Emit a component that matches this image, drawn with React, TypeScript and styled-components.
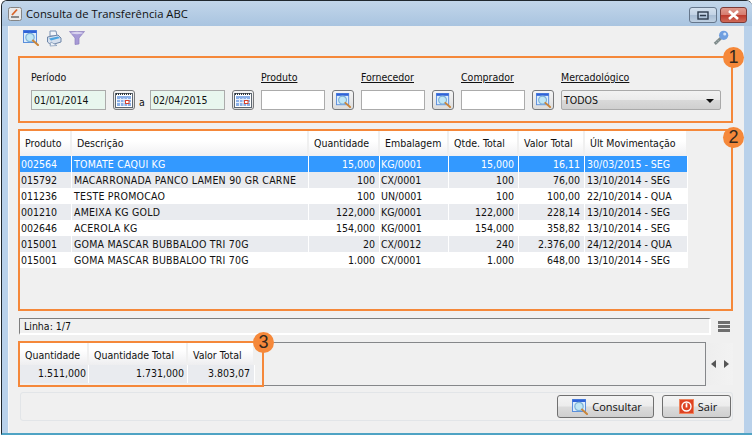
import React from "react";
import styled, { createGlobalStyle } from "styled-components";

const GlobalStyle = createGlobalStyle`
  html, body {
    margin: 0;
    padding: 0;
    background: #ffffff;
  }
  body {
    font-family: "DejaVu Sans Condensed", "Liberation Sans", Arial, sans-serif;
    font-size: 10.5px;
    color: #111;
  }
`;

const ORANGE = "#f5883a";

const Window = styled.div`
  box-sizing: border-box;
  width: 751px;
  height: 435px;
  margin-left: 1px;
  border: 1px solid #20282e;
  border-right: none;
  border-bottom: 2px solid #4fa3c4;
  border-radius: 6px 6px 0 0;
  background: #b9d1ea;
  display: flex;
  flex-direction: column;
  overflow: hidden;
`;

const TitleBar = styled.header`
  box-sizing: border-box;
  height: 25px;
  flex: none;
  display: flex;
  align-items: center;
  padding: 0 5px 0 5px;
  background: linear-gradient(#c2d6ea, #a9c4e0);
`;

const TitleText = styled.span`
  margin-left: 3px;
  font-family: "Open Sans", sans-serif;
  font-size: 11.3px;
  color: #111;
`;

const Controls = styled.div`
  margin-left: auto;
  display: flex;
  gap: 3px;
  align-self: flex-start;
  margin-top: 6px;
`;

const WinButton = styled.div<{ $close?: boolean }>`
  box-sizing: border-box;
  width: ${(p) => (p.$close ? "27px" : "28px")};
  height: 16px;
  border: 1px solid ${(p) => (p.$close ? "#7c3a36" : "#66778c")};
  border-radius: 3px;
  display: flex;
  align-items: center;
  justify-content: center;
  background: ${(p) =>
    p.$close
      ? "linear-gradient(#e09b8e 0%, #d77c6f 48%, #bd3a2c 52%, #d06a58 100%)"
      : "linear-gradient(#d3e0ee 0%, #c3d3e5 48%, #a8bdd4 52%, #bfd0e2 100%)"};
`;

const Client = styled.main`
  box-sizing: border-box;
  flex: 1;
  min-height: 0;
  margin: 0 8px 0 6px;
  background: #f0f0f0;
  border-left: 1px solid #f8f8f8;
  display: flex;
  flex-direction: column;
  padding: 0 0 0 9px;
`;

const Toolbar = styled.div`
  box-sizing: border-box;
  width: 715px;
  height: 30px;
  flex: none;
  display: flex;
  align-items: center;
  gap: 7px;
  padding: 0 4px 6px 5px;
`;

const ToolSpacer = styled.div`
  flex: 1;
`;

const Marked = styled.section`
  box-sizing: border-box;
  position: relative;
  border: 2px solid ${ORANGE};
`;

const FilterBox = styled(Marked)`
  height: 67px;
  width: 715px;
  flex: none;
  padding: 12px 10px 0 11px;
  display: flex;
`;

const Badge = styled.div<{ $top: number; $right: number }>`
  position: absolute;
  width: 21px;
  height: 21px;
  border-radius: 50%;
  background: ${ORANGE};
  color: #33281e;
  font-family: "Liberation Sans", Arial, sans-serif;
  font-size: 18px;
  line-height: 21px;
  text-align: center;
  right: ${(p) => p.$right}px;
  top: ${(p) => p.$top}px;
`;

const Field = styled.div<{ $width: number }>`
  width: ${(p) => p.$width}px;
  flex: none;
  display: flex;
  flex-direction: column;
`;

const FieldLabel = styled.span<{ $link?: boolean }>`
  height: 20px;
  line-height: 15px;
  text-decoration: ${(p) => (p.$link ? "underline" : "none")};
`;

const FieldRow = styled.div`
  display: flex;
  align-items: center;
  height: 20px;
`;

const TextBox = styled.div<{ $width: number; $date?: boolean }>`
  box-sizing: border-box;
  width: ${(p) => p.$width}px;
  height: 20px;
  border: 1px solid #ababab;
  background: ${(p) => (p.$date ? "#e8f6ee" : "#ffffff")};
  padding-left: 2px;
  line-height: 18px;
`;

const IconButton = styled.div`
  box-sizing: border-box;
  width: 22px;
  height: 20px;
  margin-left: 7px;
  border: 1px solid #77787a;
  border-radius: 3px;
  background: linear-gradient(#f6f6f6, #dcdcdc);
  display: flex;
  align-items: center;
  justify-content: center;
`;

const Between = styled.span`
  width: 11px;
  margin-left: 4px;
  padding-top: 4px;
  line-height: 14px;
`;

const SelectBox = styled.div`
  box-sizing: border-box;
  width: 160px;
  height: 20px;
  border: 1px solid #a9a9a9;
  border-radius: 2px;
  background: linear-gradient(#f2f2f2 0%, #ebebeb 48%, #d9d9d9 52%, #cfcfcf 100%);
  display: flex;
  align-items: center;
  justify-content: space-between;
  padding: 0 6px 0 2px;
`;

const Caret = styled.span`
  width: 0;
  height: 0;
  margin-top: 2px;
  border-left: 4px solid transparent;
  border-right: 4px solid transparent;
  border-top: 4px solid #111;
`;

const GridBox = styled(Marked)`
  height: 182px;
  width: 715px;
  flex: none;
  margin-top: 6px;
`;

const Table = styled.div`
  width: 668px;
  background: #ffffff;
`;

const COLUMNS = "52px 237px 71px 69px 70px 66px 103px";

const HeaderRow = styled.div<{ $columns: string }>`
  display: grid;
  grid-template-columns: ${(p) => p.$columns};
  height: 25px;
  background: linear-gradient(#ffffff 40%, #f0f0f2 100%);
`;

const HeadCell = styled.div`
  padding-left: 5px;
  line-height: 25px;
  border-right: 2px solid #f0f0f0;
  white-space: nowrap;
  overflow: hidden;
`;

const DataRow = styled.div<{ $striped?: boolean; $selected?: boolean }>`
  display: grid;
  grid-template-columns: ${COLUMNS};
  height: 16px;
  line-height: 16px;
  background: ${(p) =>
    p.$selected ? "#3399ff" : p.$striped ? "#e9ebef" : "#ffffff"};
  color: ${(p) => (p.$selected ? "#ffffff" : "#111")};
`;

const Cell = styled.div<{ $right?: boolean; $pad?: number; $end?: number }>`
  padding: 0 ${(p) => (p.$right ? p.$end ?? 4 : 0)}px 0 ${(p) => p.$pad ?? 1}px;
  text-align: ${(p) => (p.$right ? "right" : "left")};
  border-right: 1px solid #ffffff;
  white-space: nowrap;
  overflow: hidden;
`;

const NameCell = styled(Cell)`
  letter-spacing: 0.22px;
`;

const StatusRow = styled.div`
  flex: none;
  height: 17px;
  margin-top: 7px;
  margin-left: 1px;
  display: flex;
  align-items: center;
`;

const StatusField = styled.div`
  box-sizing: border-box;
  width: 692px;
  height: 17px;
  border-style: solid;
  border-color: #7e7e7e #ffffff #ffffff #7e7e7e;
  border-width: 1px 2px 2px 1px;
  padding-left: 4px;
  line-height: 14px;
`;

const MenuLines = styled.div`
  margin-left: 7px;
  width: 12px;
  height: 11px;
  display: flex;
  flex-direction: column;
  justify-content: space-between;

  span {
    height: 3px;
    background: #6f6f6f;
  }
`;

const TotalsRow = styled.div`
  flex: none;
  height: 44px;
  margin-top: 7px;
  display: flex;
`;

const TotalsPanel = styled.div`
  box-sizing: border-box;
  width: 688px;
  height: 44px;
  border: 1px solid #85878a;
  border-left: none;
`;

const TotalsBox = styled(Marked)`
  width: 246px;
  height: 46px;
  margin-top: -2px;
  background: #f0f0f0;
`;

const TotalsHeader = styled(HeaderRow)`
  width: 235px;
  height: 22px;
  background: linear-gradient(#ffffff 30%, #eeeef0 100%);
`;

const TotalsData = styled.div`
  display: grid;
  grid-template-columns: 69px 99px 67px;
  width: 235px;
  height: 18px;
  line-height: 17px;
  background: #e9ebef;
`;

const Scroller = styled.div`
  box-sizing: border-box;
  width: 27px;
  height: 42px;
  margin-top: 1px;
  background: linear-gradient(90deg, #eeeeee, #f2f2f2);
  display: flex;
  align-items: center;
  justify-content: space-between;
  padding: 0 4px 0 5px;
`;

const Arrow = styled.span<{ $right?: boolean }>`
  width: 0;
  height: 0;
  border-top: 4px solid transparent;
  border-bottom: 4px solid transparent;
  ${(p) =>
    p.$right
      ? "border-left: 5px solid #555;"
      : "border-right: 5px solid #555;"}
`;

const ActionBar = styled.footer`
  box-sizing: border-box;
  flex: none;
  width: 713px;
  height: 29px;
  margin-top: 6px;
  margin-left: 2px;
  border: 1px solid #e2e5e8;
  border-radius: 3px;
  display: flex;
  align-items: center;
  justify-content: flex-end;
  gap: 8px;
  padding-right: 1px;
`;

const ActionButton = styled.div<{ $width: number }>`
  box-sizing: border-box;
  width: ${(p) => p.$width}px;
  height: 23px;
  padding-left: 3px;
  border: 1px solid #707070;
  border-radius: 3px;
  background: linear-gradient(#f4f4f4 0%, #ececec 48%, #dcdcdc 52%, #cfcfcf 100%);
  display: flex;
  align-items: center;
  justify-content: center;
  gap: 4px;
  font-family: "Open Sans", sans-serif;
  font-size: 11px;
`;

const LensIcon = ({ size = 16 }: { size?: number }) => (
  <svg width={size} height={size} viewBox="0 0 16 16">
    <rect x="0.5" y="0.5" width="13" height="12" fill="#dcecfb" stroke="#5b8fdc" />
    <rect x="0.5" y="0.5" width="13" height="2.5" fill="#2f62d8" />
    <circle cx="7" cy="7.5" r="4.2" fill="#bfe6f5" stroke="#7fb2d8" strokeWidth="1.2" />
    <path d="M10 10.5 L15 15" stroke="#c9853a" strokeWidth="2" strokeLinecap="round" />
  </svg>
);

const PrinterIcon = () => (
  <svg width="16" height="17" viewBox="0 0 16 17">
    <path d="M4 1 L10 1 L11 6 L4 6 Z" fill="#f2f6fb" stroke="#7c93b4" />
    <path d="M1.5 7 L12 5 L15 8 L15 12 L5 15 L1.5 12 Z" fill="#d6e0ee" stroke="#6e86a8" />
    <path d="M3 8.5 L12 6.5 L14 8 L5 10.5 Z" fill="#4aa3e0" />
    <path d="M5 12 L11 15.5 L4 16 Z" fill="#eef3f9" stroke="#7c93b4" strokeWidth="0.7" />
  </svg>
);

const FunnelIcon = () => (
  <svg width="16" height="14" viewBox="0 0 16 14">
    <path d="M0.5 0.5 H15.5 L10 7 V13 L6 13.5 V7 Z" fill="#a79ad6" stroke="#8d80bd" strokeWidth="0.7" />
    <ellipse cx="8" cy="2" rx="6" ry="1.2" fill="#d8d2ee" />
  </svg>
);

const KeyIcon = () => (
  <svg width="16" height="16" viewBox="0 0 18 18">
    <path d="M9 9 L2 15.5" stroke="#7e8a8a" strokeWidth="3.4" />
    <path d="M3 13 L5 15 M5 11 L7 13" stroke="#b7bfbf" strokeWidth="0.8" />
    <circle cx="12" cy="6" r="5.2" fill="#6f9fe0" />
    <circle cx="13.2" cy="4.4" r="1.7" fill="#d6e6fa" />
  </svg>
);

const CalendarIcon = () => (
  <svg width="18" height="16" viewBox="0 0 18 16">
    <rect x="0.5" y="1.5" width="17" height="14" fill="#ffffff" stroke="#5c6670" />
    <path d="M1 2 H17" stroke="#30363c" strokeWidth="2" strokeDasharray="1 1" />
    <rect x="2" y="4" width="14" height="10" fill="#8bb0e8" />
    <path d="M2 7.5 H16 M2 10.5 H16 M5.5 6 V14 M9 6 V14 M12.5 6 V14" stroke="#e6eefb" strokeWidth="1" />
    <rect x="10.5" y="8.5" width="3.5" height="3" fill="#fff" stroke="#d9402a" />
  </svg>
);

const PowerIcon = () => (
  <svg width="15" height="15" viewBox="0 0 16 16">
    <rect width="16" height="16" fill="#de4322" />
    <rect x="0.5" y="0.5" width="15" height="15" fill="none" stroke="#f08a64" />
    <circle cx="8" cy="8" r="4.8" fill="none" stroke="#ffffff" strokeWidth="1.5" />
    <path d="M8 4.5 V9" stroke="#ffffff" strokeWidth="1.8" />
  </svg>
);

const AppIcon = () => (
  <svg width="16" height="16" viewBox="0 0 16 16">
    <rect x="1.5" y="1.5" width="13" height="13" rx="2" fill="#eaeaea" stroke="#858585" />
    <path d="M4 11 H12" stroke="#6b6b6b" strokeWidth="1.5" />
    <path d="M5 9 L10 3.5" stroke="#d8642a" strokeWidth="1.8" />
  </svg>
);

type Item = {
  code: string;
  name: string;
  qty: string;
  pack: string;
  total: string;
  value: string;
  moved: string;
};

const items: Item[] = [
  { code: "002564", name: "TOMATE CAQUI KG", qty: "15,000", pack: "KG/0001", total: "15,000", value: "16,11", moved: "30/03/2015 - SEG" },
  { code: "015792", name: "MACARRONADA PANCO LAMEN 90 GR CARNE", qty: "100", pack: "CX/0001", total: "100", value: "76,00", moved: "13/10/2014 - SEG" },
  { code: "011236", name: "TESTE PROMOCAO", qty: "100", pack: "UN/0001", total: "100", value: "100,00", moved: "22/10/2014 - QUA" },
  { code: "001210", name: "AMEIXA KG GOLD", qty: "122,000", pack: "KG/0001", total: "122,000", value: "228,14", moved: "13/10/2014 - SEG" },
  { code: "002646", name: "ACEROLA KG", qty: "154,000", pack: "KG/0001", total: "154,000", value: "358,82", moved: "13/10/2014 - SEG" },
  { code: "015001", name: "GOMA MASCAR BUBBALOO TRI 70G", qty: "20", pack: "CX/0012", total: "240", value: "2.376,00", moved: "24/12/2014 - QUA" },
  { code: "015001", name: "GOMA MASCAR BUBBALOO TRI 70G", qty: "1.000", pack: "CX/0001", total: "1.000", value: "648,00", moved: "13/10/2014 - SEG" },
];

const headers = ["Produto", "Descrição", "Quantidade", "Embalagem", "Qtde. Total", "Valor Total", "Últ Movimentação"];

const lookups = ["Produto", "Fornecedor", "Comprador"];

export default function App() {
  return (
    <>
      <GlobalStyle />
      <Window>
        <TitleBar>
          <AppIcon />
          <TitleText>Consulta de Transferência ABC</TitleText>
          <Controls>
            <WinButton>
              <svg width="12" height="9" viewBox="0 0 12 9">
                <rect x="1" y="1" width="10" height="7" fill="none" stroke="#2c3a4c" strokeWidth="1.4" />
                <path d="M3 4.5 H9" stroke="#2c3a4c" strokeWidth="1.4" />
              </svg>
            </WinButton>
            <WinButton $close>
              <svg width="13" height="10" viewBox="0 0 13 10">
                <path d="M2 1 L11 9 M11 1 L2 9" stroke="#ffffff" strokeWidth="2.6" />
              </svg>
            </WinButton>
          </Controls>
        </TitleBar>
        <Client>
          <Toolbar>
            <LensIcon />
            <PrinterIcon />
            <FunnelIcon />
            <ToolSpacer />
            <KeyIcon />
          </Toolbar>

          <FilterBox>
            <Badge $top={-11} $right={-13}>1</Badge>
            <Field $width={230}>
              <FieldLabel>Período</FieldLabel>
              <FieldRow>
                <TextBox $width={75} $date>01/01/2014</TextBox>
                <IconButton><CalendarIcon /></IconButton>
                <Between>a</Between>
                <TextBox $width={75} $date>02/04/2015</TextBox>
                <IconButton><CalendarIcon /></IconButton>
              </FieldRow>
            </Field>
            {lookups.map((label) => (
              <Field $width={100} key={label}>
                <FieldLabel $link>{label}</FieldLabel>
                <FieldRow>
                  <TextBox $width={64} />
                  <IconButton><LensIcon size={15} /></IconButton>
                </FieldRow>
              </Field>
            ))}
            <Field $width={160}>
              <FieldLabel $link>Mercadológico</FieldLabel>
              <SelectBox>
                TODOS
                <Caret />
              </SelectBox>
            </Field>
          </FilterBox>

          <GridBox>
            <Badge $top={-4} $right={-13}>2</Badge>
            <Table>
              <HeaderRow $columns={COLUMNS}>
                {headers.map((header) => (
                  <HeadCell key={header}>{header}</HeadCell>
                ))}
              </HeaderRow>
              {items.map((item, index) => (
                <DataRow
                  key={item.code + item.qty}
                  $selected={index === 0}
                  $striped={index % 2 === 1}
                >
                  <Cell>{item.code}</Cell>
                  <NameCell $pad={2}>{item.name}</NameCell>
                  <Cell $right>{item.qty}</Cell>
                  <Cell>{item.pack}</Cell>
                  <Cell $right>{item.total}</Cell>
                  <Cell $right>{item.value}</Cell>
                  <Cell $pad={2}>{item.moved}</Cell>
                </DataRow>
              ))}
            </Table>
          </GridBox>

          <StatusRow>
            <StatusField>Linha: 1/7</StatusField>
            <MenuLines>
              <span />
              <span />
              <span />
            </MenuLines>
          </StatusRow>

          <TotalsRow>
            <TotalsPanel>
              <TotalsBox>
                <Badge $top={-11} $right={-12}>3</Badge>
                <TotalsHeader $columns="69px 99px 67px">
                  <HeadCell>Quantidade</HeadCell>
                  <HeadCell>Quantidade Total</HeadCell>
                  <HeadCell>Valor Total</HeadCell>
                </TotalsHeader>
                <TotalsData>
                  <Cell $right $end={2}>1.511,000</Cell>
                  <Cell $right $end={3}>1.731,000</Cell>
                  <Cell $right>3.803,07</Cell>
                </TotalsData>
              </TotalsBox>
            </TotalsPanel>
            <Scroller>
              <Arrow />
              <Arrow $right />
            </Scroller>
          </TotalsRow>

          <ActionBar>
            <ActionButton $width={97}>
              <LensIcon />
              Consultar
            </ActionButton>
            <ActionButton $width={69}>
              <PowerIcon />
              Sair
            </ActionButton>
          </ActionBar>
        </Client>
      </Window>
    </>
  );
}
